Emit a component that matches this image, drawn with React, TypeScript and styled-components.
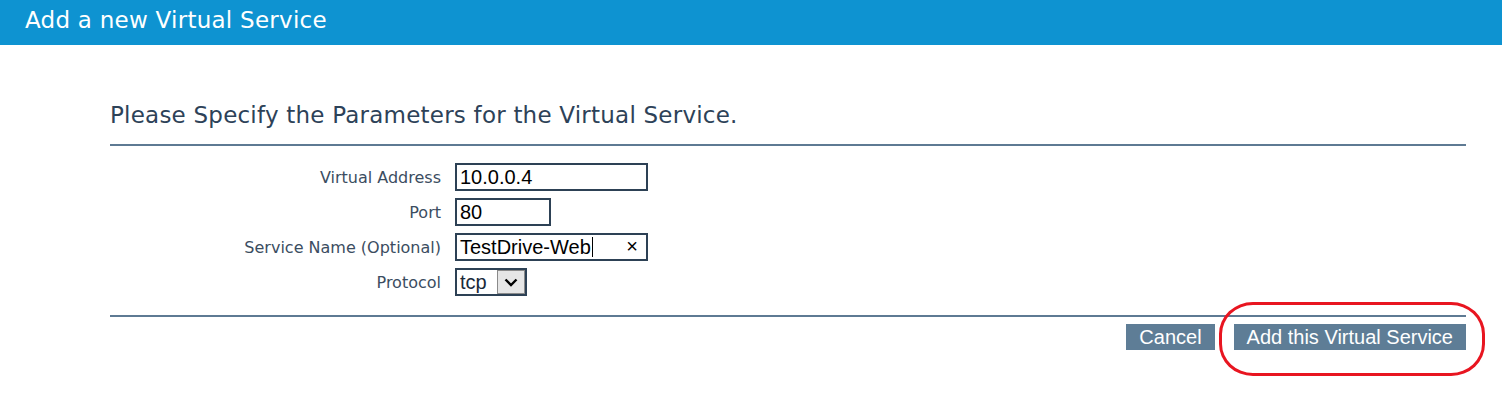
import React from "react";
import styled, { createGlobalStyle } from "styled-components";

const Global = createGlobalStyle`
  html, body { margin: 0; padding: 0; background: #ffffff; }
  body { font-family: "DejaVu Sans", "Noto Sans", sans-serif; }
`;

const Page = styled.div`
  min-height: 409px;
`;

const Header = styled.header`
  height: 45px;
  background: #0e93d1;
  display: flex;
  align-items: center;
  padding-left: 25px;
`;

const HeaderTitle = styled.h1`
  margin: 0;
  color: #ffffff;
  font-family: "DejaVu Sans", sans-serif;
  font-weight: 400;
  font-size: 23px;
  letter-spacing: 0.25px;
  line-height: 1;
  padding-bottom: 4px;
`;

const Main = styled.main`
  margin: 0 36px 0 110px;
`;

const Heading = styled.h2`
  margin: 0;
  padding-top: 55px;
  height: 44px;
  color: #2d4258;
  font-family: "DejaVu Sans", sans-serif;
  font-weight: 400;
  font-size: 23px;
  letter-spacing: 0.22px;
  line-height: 30px;
`;

const Rule = styled.hr`
  margin: 0;
  border: 0;
  height: 2px;
  background: #5e7a93;
`;

const Form = styled.div`
  display: grid;
  grid-template-columns: 331px auto;
  grid-auto-rows: 28px;
  column-gap: 14px;
  row-gap: 7px;
  padding: 17px 0 19px;
  align-items: center;
`;

const Label = styled.label`
  text-align: right;
  color: #3b4d61;
  font-family: "DejaVu Sans", sans-serif;
  font-size: 16px;
  line-height: 26px;
  padding-top: 2px;
`;

const Field = styled.div<{ $w: number }>`
  box-sizing: border-box;
  width: ${(p) => p.$w}px;
  height: 28px;
  border: 2px solid #2d4155;
  background: #fff;
  display: flex;
  align-items: center;
  padding-left: 3px;
  font-family: "Liberation Sans", Arial, sans-serif;
  font-size: 20px;
  color: #000;
  position: relative;
`;

const Caret = styled.span`
  display: inline-block;
  width: 1px;
  height: 20px;
  background: #000;
  margin-left: 1px;
`;

const Clear = styled.span`
  position: absolute;
  right: 8px;
  top: 50%;
  transform: translateY(-52%);
  font-size: 20px;
  color: #000;
`;

const SelectBox = styled.div`
  box-sizing: border-box;
  width: 72px;
  height: 28px;
  border: 2px solid #2d4155;
  background: #fff;
  display: flex;
  align-items: stretch;
  font-family: "Liberation Sans", Arial, sans-serif;
  font-size: 20px;
  color: #1a2a3a;
`;

const SelectText = styled.span`
  flex: 1;
  padding-left: 3px;
  display: flex;
  align-items: center;
`;

const SelectArrow = styled.span`
  width: 28px;
  box-sizing: border-box;
  background: #e6e6e6;
  border: 1px solid #8a8a8a;
  display: flex;
  align-items: center;
  justify-content: center;
`;

const Actions = styled.div`
  display: flex;
  justify-content: flex-end;
  gap: 19px;
  padding-top: 7px;
`;

const Emphasis = styled.span`
  position: relative;
  display: inline-flex;
`;

const Button = styled.button`
  height: 26px;
  border: 0;
  background: #5e7d96;
  color: #ffffff;
  font-family: "Liberation Sans", Arial, sans-serif;
  font-size: 20px;
  padding: 0 13px;
  line-height: 26px;
  cursor: pointer;
`;

const Highlight = styled.div`
  position: absolute;
  left: -15px;
  top: -22px;
  width: 266px;
  height: 74px;
  box-sizing: border-box;
  border: 3px solid #e81520;
  border-radius: 34px / 32px;
  pointer-events: none;
`;

export default function App() {
  return (
    <Page>
      <Global />
      <Header>
        <HeaderTitle>Add a new Virtual Service</HeaderTitle>
      </Header>
      <Main>
        <Heading>Please Specify the Parameters for the Virtual Service.</Heading>
        <Rule />
        <Form>
          <Label>Virtual Address</Label>
          <Field $w={193}>10.0.0.4</Field>
          <Label>Port</Label>
          <Field $w={96}>80</Field>
          <Label>Service Name (Optional)</Label>
          <Field $w={193}>
            TestDrive-Web
            <Caret />
            <Clear>×</Clear>
          </Field>
          <Label>Protocol</Label>
          <SelectBox>
            <SelectText>tcp</SelectText>
            <SelectArrow>
              <svg width="14" height="9" viewBox="0 0 14 9">
                <path d="M1.5 1.5 L7 7 L12.5 1.5" fill="none" stroke="#000" strokeWidth="2.4" />
              </svg>
            </SelectArrow>
          </SelectBox>
        </Form>
        <Rule />
        <Actions>
          <Button>Cancel</Button>
          <Emphasis>
            <Button>Add this Virtual Service</Button>
            <Highlight />
          </Emphasis>
        </Actions>
      </Main>
    </Page>
  );
}
